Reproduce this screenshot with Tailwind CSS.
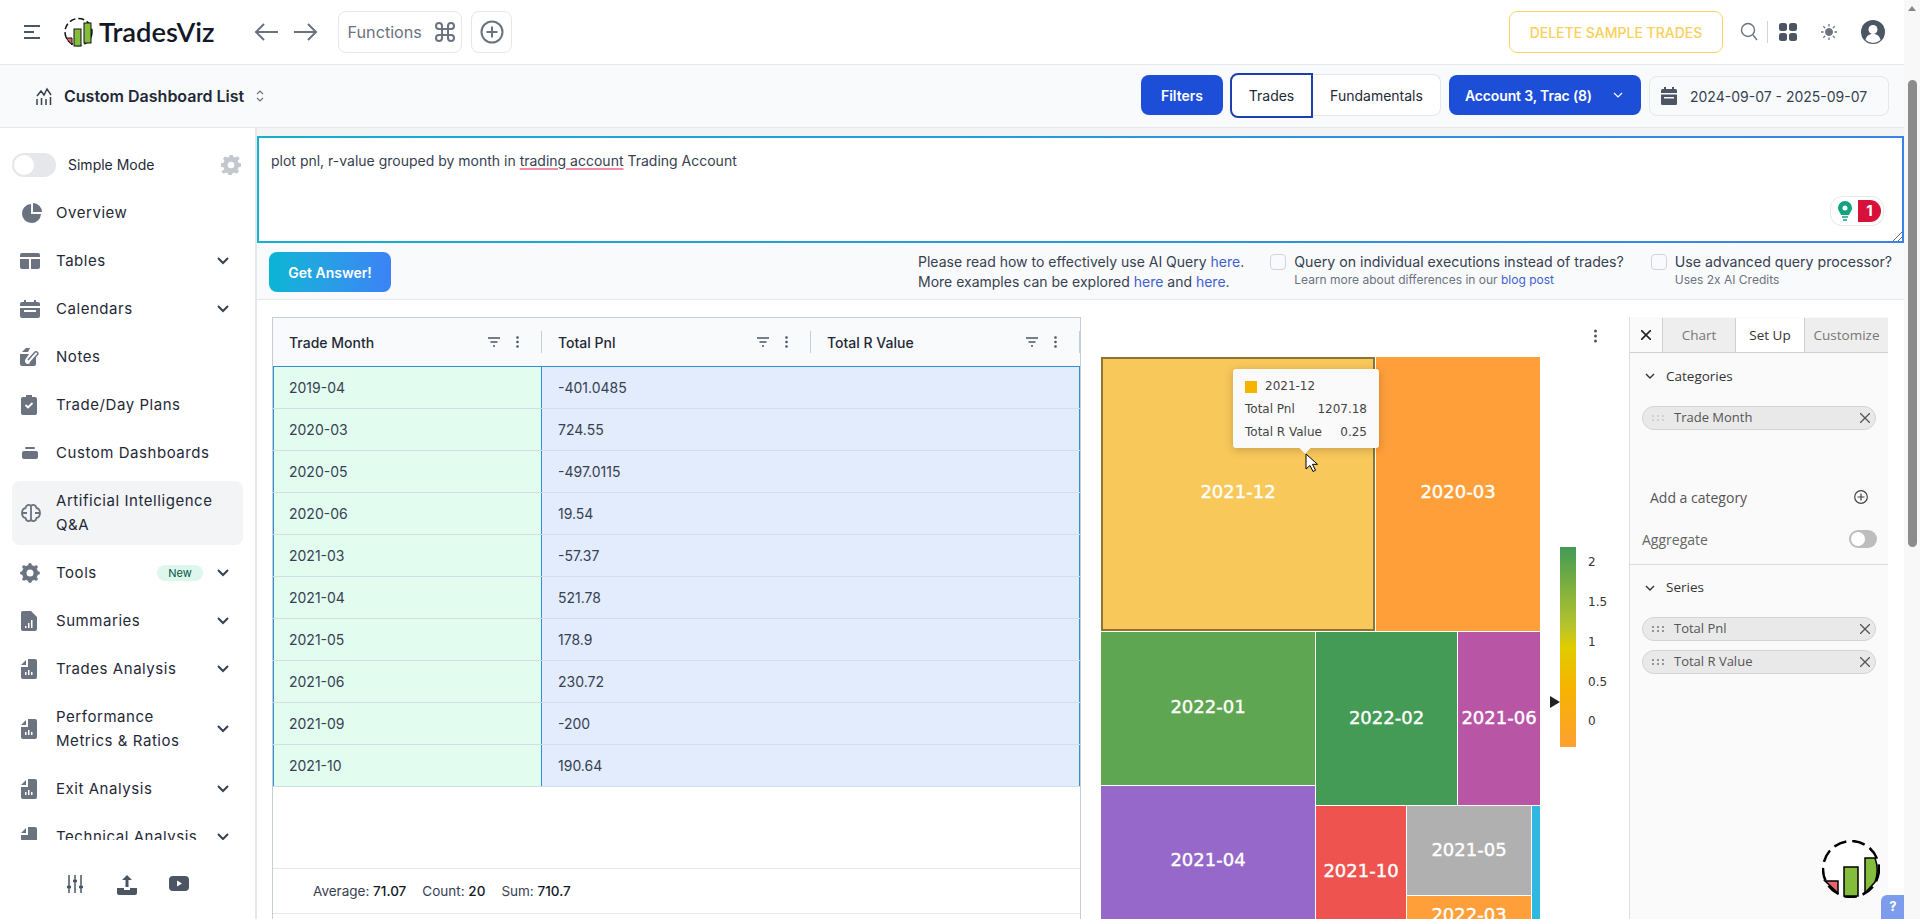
<!DOCTYPE html>
<html lang="en">
<head>
  <meta charset="UTF-8" />
  <title>TradesViz</title>
  <script src="https://cdn.jsdelivr.net/npm/@tailwindcss/browser@4"></script>
</head>
<body class="bg-white text-[#1f2937] [font-family:Inter,sans-serif]">
<div class="flex h-[919px] w-[1920px] overflow-hidden">
  <div class="flex w-[1904px] flex-col">

    <!-- Header -->
    <header class="flex h-[65px] shrink-0 items-center border-b border-[#e5e7eb] bg-white pl-6 pr-[19px]">
      <svg class="h-4 w-4" viewBox="0 0 16 16" fill="none" stroke="#4b5563" stroke-width="2"><path d="M0 2h16M0 8h10M0 14h16"/></svg>
      <svg class="ml-6 h-[36px] w-[29px]" viewBox="0 0 29 36"><circle cx="14.5" cy="18" r="13.5" fill="#fff" stroke="#111" stroke-width="1.5" stroke-dasharray="6 3"/><path d="M2 24l6 0 0 7z" fill="#e5646f" stroke="#111"/><rect x="10" y="15" width="7" height="17" fill="#84bd3c" stroke="#111"/><rect x="20" y="9" width="7" height="20" fill="#84bd3c" stroke="#111"/></svg>
      <span class="ml-[6px] text-[27.4px] leading-none font-semibold text-[#111827] [font-family:Lato,sans-serif]">TradesViz</span>
      <svg class="ml-10 h-5 w-6" viewBox="0 0 24 20" fill="none" stroke="#6b7280" stroke-width="2"><path d="M24 10H2M10 2l-8 8 8 8"/></svg>
      <svg class="ml-4 h-5 w-6" viewBox="0 0 24 20" fill="none" stroke="#6b7280" stroke-width="2"><path d="M0 10h22M14 2l8 8-8 8"/></svg>
      <div class="ml-5 flex h-[42px] w-[124px] items-center rounded-lg border border-[#e5e7eb] pl-2 text-[16.2px] text-[#6b7280]">
        Functions
        <svg class="ml-[11px] h-6 w-6" viewBox="0 0 24 24" fill="none" stroke="#6b7280" stroke-width="2"><path d="M9 9V6a3 3 0 1 0-3 3h12a3 3 0 1 0-3-3v12a3 3 0 1 0 3-3H6a3 3 0 1 0 3 3V9z"/></svg>
      </div>
      <div class="ml-[9px] flex h-[42px] w-[41px] items-center justify-center rounded-lg border border-[#e5e7eb]">
        <svg class="h-6 w-6" viewBox="0 0 24 24" fill="none" stroke="#6b7280" stroke-width="2"><circle cx="12" cy="12" r="10.5"/><path d="M12 6.5v11M6.5 12h11"/></svg>
      </div>
      <button class="ml-auto h-[42px] w-[214px] rounded-lg border border-[#f8d568] text-[14px] font-medium text-[#f9cf58]">DELETE SAMPLE TRADES</button>
      <svg class="ml-[17px] h-5 w-[18px]" viewBox="0 0 18 20" fill="none" stroke="#6b7280" stroke-width="1.4"><circle cx="8" cy="8" r="6.5"/><path d="M13 13l4 5"/></svg>
      <div class="ml-[9px] h-[22px] w-px bg-[#d1d5db]"></div>
      <svg class="ml-[11px] h-[18px] w-[18px]" viewBox="0 0 18 18" fill="#4b5563"><rect width="8" height="8" rx="2.5"/><rect x="10" width="8" height="8" rx="2.5"/><rect y="10" width="8" height="8" rx="2.5"/><rect x="10" y="10" width="8" height="8" rx="2.5"/></svg>
      <svg class="ml-[24px] h-4 w-4" viewBox="0 0 16 16" fill="#6b7280" stroke="#6b7280"><circle cx="8" cy="8" r="3.5"/><path d="M8 0v2.5M8 13.500V16M0 8h2.500M13.500 8H16M2.300 2.300l1.800 1.800M11.900 11.900l1.800 1.800M2.300 13.700l1.800-1.800M11.900 4.100l1.800-1.800" fill="none" stroke-width="1.300"/></svg>
      <svg class="ml-[24px] h-6 w-6" viewBox="0 0 24 24"><circle cx="12" cy="12" r="12" fill="#4b5563"/><circle cx="12" cy="9.500" r="4.500" fill="#fff"/><path d="M4.500 20c1-4.500 4-6 7.500-6s6.500 1.500 7.500 6a11 11 0 0 1-15 0z" fill="#fff"/></svg>
    </header>

    <!-- Sub header -->
    <div class="flex h-[63px] shrink-0 items-center border-b border-[#e5e7eb] bg-[#f9fafb] pl-9 pr-[15px]">
      <svg class="h-[18px] w-4" viewBox="0 0 16 18" fill="none" stroke="#374151" stroke-width="1.500"><path d="M1 9l4-5 3 4 3-6 4 6M1 12v6M5.500 11v7M10 12v6M14.500 10v8"/></svg>
      <span class="ml-3 text-[16px] font-semibold text-[#1f2937]">Custom Dashboard List</span>
      <svg class="ml-3 h-3 w-2" viewBox="0 0 8 12" fill="none" stroke="#6b7280" stroke-width="1.200"><path d="M1 4l3-3 3 3M1 8l3 3 3-3"/></svg>
      <button class="mb-[2px] ml-auto h-10 w-[82px] rounded-lg bg-[#1d4ed8] text-[14px] font-semibold text-white">Filters</button>
      <div class="mb-[2px] ml-[7px] flex h-[44px] items-center">
        <span class="flex h-[45px] w-[83px] items-center justify-center rounded-l-lg border-2 border-[#1e40af] bg-white text-[14px] text-[#1f2937]">Trades</span>
        <span class="flex h-[42px] w-[128px] items-center justify-center rounded-r-lg border border-l-0 border-[#e5e7eb] bg-white text-[14px] text-[#1f2937]">Fundamentals</span>
      </div>
      <button class="mb-[2px] ml-2 flex h-10 w-[192px] items-center rounded-lg bg-[#1d4ed8] pl-4 text-[14px] font-semibold text-white">
        <span class="w-[125px] whitespace-nowrap text-left tracking-[-0.15px]">Account 3, Trac (8)</span>
        <svg class="ml-[23px] h-2 w-[10px]" viewBox="0 0 10 8" fill="none" stroke="#fff" stroke-width="1.200"><path d="M1 2l4 4 4-4"/></svg>
      </button>
      <div class="ml-2 flex h-10 w-[240px] items-center rounded-lg border border-[#e5e7eb] bg-[#f9fafb] pl-[11px] text-[14px] text-[#374151]">
        <svg class="h-[18px] w-4" viewBox="0 0 16 18" fill="#4b5563"><path d="M3 0h2v2h6V0h2v2h1.500A1.500 1.500 0 0 1 16 3.500V6H0V3.500A1.500 1.500 0 0 1 1.500 2H3zM0 7.500h16v9a1.500 1.500 0 0 1-1.500 1.500h-13A1.500 1.500 0 0 1 0 16.500zM3 10v1.500h10V10z"/></svg>
        <span class="ml-[13px]">2024-09-07 - 2025-09-07</span>
      </div>
    </div>

    <div class="flex min-h-0 flex-1">
      <!-- Sidebar -->
      <aside class="flex w-[257px] shrink-0 flex-col border-r-2 border-[#e5e7eb] bg-white">
        <div class="h-[712px] shrink-0 overflow-hidden text-[15px] tracking-[0.55px] text-[#1f2937]">
          <div class="mt-3 flex h-[49px] items-center pl-3 pr-3">
            <span class="flex h-[24px] w-[44px] items-center rounded-full bg-[#e5e7eb] pl-[2px]"><span class="h-5 w-5 rounded-full bg-white"></span></span>
            <span class="ml-[12px] text-[14px] tracking-normal">Simple Mode</span>
            <svg class="ml-auto mr-[2px] h-5 w-5" viewBox="0 0 24 24" fill="#c4c8ce"><path d="M10 1h4l.7 3 2.500 1 2.600-1.600 2.800 2.800L20 8.800l1 2.500 3 .7v4l-3 .7-1 2.500 1.600 2.600-2.800 2.800-2.600-1.600-2.500 1-.7 3h-4l-.7-3-2.500-1-2.600 1.600-2.800-2.800L4 19.200 3 16.700 0 16v-4l3-.7 1-2.500L2.400 6.200l2.800-2.800L7.800 5l2.500-1z" transform="translate(0 -2)"/><circle cx="12" cy="12" r="4" fill="#fff"/></svg>
          </div>
          <div class="flex h-12 items-center pl-[22px]">
            <svg class="h-5 w-5" viewBox="0 0 20 20" fill="#6b7280"><path d="M9 1v10h10A9.500 9.500 0 1 1 9 1z"/><path d="M11 0a9 9 0 0 1 9 9h-9z"/></svg>
            <span class="ml-[14px]">Overview</span>
          </div>
          <div class="flex h-12 items-center pl-5 pr-[26px]">
            <svg class="h-4 w-5" viewBox="0 0 20 16" fill="#6b7280"><path d="M2 0h16a2 2 0 0 1 2 2v2H0V2a2 2 0 0 1 2-2zM0 6h9v10H2a2 2 0 0 1-2-2zM11 6h9v8a2 2 0 0 1-2 2h-7z"/></svg>
            <span class="ml-4">Tables</span>
            <svg class="ml-auto h-2 w-3" viewBox="0 0 12 8" fill="none" stroke="#374151" stroke-width="2"><path d="M1 1l5 5 5-5"/></svg>
          </div>
          <div class="flex h-12 items-center pl-5 pr-[26px]">
            <svg class="h-[18px] w-5" viewBox="0 0 20 18" fill="#6b7280"><path d="M4 0h2v2h8V0h2v2h2a2 2 0 0 1 2 2v2H0V4a2 2 0 0 1 2-2h2zM0 8h20v8a2 2 0 0 1-2 2H2a2 2 0 0 1-2-2zM4 10v2h12v-2z"/></svg>
            <span class="ml-4">Calendars</span>
            <svg class="ml-auto h-2 w-3" viewBox="0 0 12 8" fill="none" stroke="#374151" stroke-width="2"><path d="M1 1l5 5 5-5"/></svg>
          </div>
          <div class="flex h-12 items-center pl-5">
            <svg class="h-[18px] w-5" viewBox="0 0 20 18" fill="#6b7280"><path d="M2 4l4-4h4L8 4zM0 6h9L5 12a3 3 0 0 0 5 3l6-7v8a2 2 0 0 1-2 2H2a2 2 0 0 1-2-2z"/><path d="M8 12l7-8a2 2 0 0 1 3 2l-8 9" fill="none" stroke="#6b7280" stroke-width="1.500"/></svg>
            <span class="ml-4">Notes</span>
          </div>
          <div class="flex h-12 items-center pl-[21px]">
            <svg class="h-5 w-4" viewBox="0 0 16 20" fill="#6b7280"><path d="M5 0h6v2h3a2 2 0 0 1 2 2v14a2 2 0 0 1-2 2H2a2 2 0 0 1-2-2V4a2 2 0 0 1 2-2h3z"/><path d="M4.500 10l2.500 2.500 4.500-4.500" fill="none" stroke="#fff" stroke-width="1.800"/></svg>
            <span class="ml-[19px]">Trade/Day Plans</span>
          </div>
          <div class="flex h-12 items-center pl-[22px]">
            <svg class="h-3 w-4" viewBox="0 0 16 12" fill="#6b7280"><rect x="3" width="10" height="2" rx="1"/><path d="M2 4h12a2 2 0 0 1 2 2v4a2 2 0 0 1-2 2H2a2 2 0 0 1-2-2V6a2 2 0 0 1 2-2z"/></svg>
            <span class="ml-[18px]">Custom Dashboards</span>
          </div>
          <div class="mx-3 my-1 flex h-16 items-center rounded-lg bg-[#f3f4f6] pl-[9px] leading-6">
            <svg class="h-5 w-5 shrink-0" viewBox="0 0 20 20" fill="none" stroke="#6b7280" stroke-width="1.800"><path d="M10 3C8 1 5 2 4.500 5 2 5.500 1 8 1 10s1 4.500 3.500 5c.5 3 3.500 4 5.500 2 2 2 5 1 5.500-2 2.500-.5 3.500-3 3.500-5s-1-4.500-3.500-5C15 2 12 1 10 3zM10 3v14M1 10h5M14 10h5"/></svg>
            <span class="ml-[15px]">Artificial Intelligence<br>Q&amp;A</span>
          </div>
          <div class="flex h-12 items-center pl-5 pr-[26px]">
            <svg class="h-5 w-5" viewBox="0 0 20 20" fill="#6b7280"><circle cx="10" cy="10" r="8"/><circle cx="10" cy="1.800" r="1.800"/><circle cx="10" cy="18.200" r="1.800"/><circle cx="1.800" cy="10" r="1.800"/><circle cx="18.200" cy="10" r="1.800"/><circle cx="4" cy="4" r="1.800"/><circle cx="16" cy="4" r="1.800"/><circle cx="4" cy="16" r="1.800"/><circle cx="16" cy="16" r="1.800"/><circle cx="10" cy="10" r="3.500" fill="#fff"/></svg>
            <span class="ml-4">Tools</span>
            <span class="ml-auto flex h-4 w-[46px] items-center justify-center rounded-full bg-[#def7ec] text-[11px] tracking-normal text-[#03543f]">New</span>
            <svg class="ml-[14px] h-2 w-3" viewBox="0 0 12 8" fill="none" stroke="#374151" stroke-width="2"><path d="M1 1l5 5 5-5"/></svg>
          </div>
          <div class="flex h-12 items-center pl-[21px] pr-[26px]">
            <svg class="h-5 w-4" viewBox="0 0 16 20" fill="#6b7280"><path d="M2 0h8l6 6v12a2 2 0 0 1-2 2H2a2 2 0 0 1-2-2V2a2 2 0 0 1 2-2z"/><path d="M4 15v2h1.500v-2zM7 12v5h1.500v-5zM10 9v8h1.500V9z" fill="#fff"/></svg>
            <span class="ml-[19px]">Summaries</span>
            <svg class="ml-auto h-2 w-3" viewBox="0 0 12 8" fill="none" stroke="#374151" stroke-width="2"><path d="M1 1l5 5 5-5"/></svg>
          </div>
          <div class="flex h-12 items-center pl-[21px] pr-[26px]">
            <svg class="h-5 w-4" viewBox="0 0 16 20" fill="#6b7280"><path d="M0 6l5-5v5zM7 0h7a2 2 0 0 1 2 2v16a2 2 0 0 1-2 2H2a2 2 0 0 1-2-2V8h7z"/><path d="M4 13v3h1.500v-3zM7 11v5h1.500v-5zM10 13v3h1.500v-3z" fill="#fff"/></svg>
            <span class="ml-[19px]">Trades Analysis</span>
            <svg class="ml-auto h-2 w-3" viewBox="0 0 12 8" fill="none" stroke="#374151" stroke-width="2"><path d="M1 1l5 5 5-5"/></svg>
          </div>
          <div class="flex h-[72px] items-center pl-[21px] pr-[26px] leading-6">
            <svg class="h-5 w-4" viewBox="0 0 16 20" fill="#6b7280"><path d="M0 6l5-5v5zM7 0h7a2 2 0 0 1 2 2v16a2 2 0 0 1-2 2H2a2 2 0 0 1-2-2V8h7z"/><path d="M4 13v3h1.500v-3zM7 11v5h1.500v-5zM10 13v3h1.500v-3z" fill="#fff"/></svg>
            <span class="ml-[19px]">Performance<br>Metrics &amp; Ratios</span>
            <svg class="ml-auto h-2 w-3" viewBox="0 0 12 8" fill="none" stroke="#374151" stroke-width="2"><path d="M1 1l5 5 5-5"/></svg>
          </div>
          <div class="flex h-12 items-center pl-[21px] pr-[26px]">
            <svg class="h-5 w-4" viewBox="0 0 16 20" fill="#6b7280"><path d="M0 6l5-5v5zM7 0h7a2 2 0 0 1 2 2v16a2 2 0 0 1-2 2H2a2 2 0 0 1-2-2V8h7z"/><path d="M4 13v3h1.500v-3zM7 11v5h1.500v-5zM10 13v3h1.500v-3z" fill="#fff"/></svg>
            <span class="ml-[19px]">Exit Analysis</span>
            <svg class="ml-auto h-2 w-3" viewBox="0 0 12 8" fill="none" stroke="#374151" stroke-width="2"><path d="M1 1l5 5 5-5"/></svg>
          </div>
          <div class="flex h-12 items-center pl-[21px] pr-[26px]">
            <svg class="h-5 w-4" viewBox="0 0 16 20" fill="#6b7280"><path d="M0 6l5-5v5zM7 0h7a2 2 0 0 1 2 2v16a2 2 0 0 1-2 2H2a2 2 0 0 1-2-2V8h7z"/></svg>
            <span class="ml-[19px]">Technical Analysis</span>
            <svg class="ml-auto h-2 w-3" viewBox="0 0 12 8" fill="none" stroke="#374151" stroke-width="2"><path d="M1 1l5 5 5-5"/></svg>
          </div>
        </div>
        <div class="flex flex-1 items-start pl-[67px] pt-[35px]">
          <svg class="h-[18px] w-4" viewBox="0 0 16 18" fill="none" stroke="#4b5563" stroke-width="1.500"><path d="M2 0v18M8 0v18M14 0v18"/><path d="M0 12h4M6 6h4M12 12h4" stroke-width="2.500"/></svg>
          <svg class="ml-[34px] h-5 w-5" viewBox="0 0 20 20" fill="#4b5563"><path d="M10 0l5 5h-3.500v7h-3V5H5zM0 13h7v2h6v-2h7v5a2 2 0 0 1-2 2H2a2 2 0 0 1-2-2z"/></svg>
          <svg class="ml-[32px] mt-[1px] h-4 w-5" viewBox="0 0 20 16" fill="#4b5563"><rect width="20" height="15" rx="4"/><path d="M8 4.500l5 3-5 3z" fill="#fff"/></svg>
        </div>
      </aside>

      <!-- Main -->
      <main class="relative flex min-w-0 flex-1 flex-col bg-white">
        <div class="h-2 shrink-0 bg-[#f3f4f6]"></div>
        <div class="relative h-[107px] shrink-0 border-2 border-transparent pl-[12px] pt-[12px] text-[14px] text-[#374151] [background:linear-gradient(#fff,#fff)_padding-box,linear-gradient(90deg,#14b0cf,#3b82e6)_border-box]">
          plot pnl, r-value grouped by month in <span class="underline decoration-[#f58ca5] decoration-2 underline-offset-2">trading account</span> Trading Account
          <div class="absolute right-[18px] bottom-[15px] flex h-[30px] w-[54px] items-center rounded-xl border border-[#e5e7eb] bg-white pl-[7px]">
            <svg class="h-5 w-[14px]" viewBox="0 0 14 20"><path d="M7 0a7 7 0 0 1 7 7c0 3-2 4-3 7H3C2 11 0 10 0 7a7 7 0 0 1 7-7z" fill="#10a37f"/><circle cx="7" cy="7" r="2.500" fill="#fff"/><path d="M4 16h6M5 19h4" stroke="#10a37f" stroke-width="1.500"/></svg>
            <span class="ml-[6px] flex h-[22px] w-[23px] items-center justify-center rounded-l-[4px] rounded-r-full bg-[#d8113a] text-[15px] font-bold text-white">1</span>
          </div>
          <svg class="absolute right-0 bottom-0 h-[10px] w-[10px]" viewBox="0 0 10 10" stroke="#666" fill="none"><path d="M1 10l9-9M6 10l4-4"/></svg>
        </div>
        <div class="flex h-[57px] shrink-0 border-b border-[#e5e7eb] bg-[#f9fafb] text-[14px] text-[#374151]">
          <button class="ml-3 mt-[9px] h-10 w-[122px] rounded-lg bg-linear-to-r from-[#06b6d4] to-[#3b82f6] text-[14px] font-semibold text-white">Get Answer!</button>
          <div class="ml-[527px] mt-[9px] leading-5">
            Please read how to effectively use AI Query <a class="text-[#3f5fd0]">here</a>.<br>
            More examples can be explored <a class="text-[#3f5fd0]">here</a> and <a class="text-[#3f5fd0]">here</a>.
          </div>
          <span class="ml-[26px] mt-[11px] h-4 w-4 rounded-[4px] border border-[#d1d5db] bg-[#f9fafb]"></span>
          <div class="ml-2 mt-[9px]">
            <div class="text-[14.15px] leading-5">Query on individual executions instead of trades?</div>
            <div class="text-[12px] leading-4 text-[#6b7280]">Learn more about differences in our <a class="text-[#3f5fd0]">blog post</a></div>
          </div>
          <span class="ml-[27px] mt-[11px] h-4 w-4 rounded-[4px] border border-[#d1d5db] bg-[#f9fafb]"></span>
          <div class="ml-2 mt-[9px]">
            <div class="text-[14.15px] leading-5">Use advanced query processor?</div>
            <div class="text-[12px] leading-4 text-[#6b7280]">Uses 2x AI Credits</div>
          </div>
        </div>

        <div class="flex min-h-0 flex-1">
          <!-- Table -->
          <div class="ml-[15px] mt-[17px] flex w-[809px] shrink-0 flex-col border border-b-0 border-[#c5ced6] text-[14px]">
            <div class="grid h-[48px] shrink-0 grid-cols-3 bg-[#f9fafb] font-medium text-[#1f2937]">
              <div class="flex items-center pl-4 pr-0">Trade Month
                <svg class="ml-auto h-[10px] w-3" viewBox="0 0 12 10" fill="none" stroke="#4b5563" stroke-width="1.500"><path d="M0 1h12M2.500 5h7M5 9h2"/></svg>
                <svg class="ml-[16px] h-3 w-[3px]" viewBox="0 0 3 12" fill="#4b5563"><circle cx="1.500" cy="1.500" r="1.300"/><circle cx="1.500" cy="6" r="1.300"/><circle cx="1.500" cy="10.500" r="1.300"/></svg>
                <span class="ml-[22px] h-[22px] w-px bg-[#c5ced6]"></span>
              </div>
              <div class="flex items-center pl-4">Total Pnl
                <svg class="ml-auto h-[10px] w-3" viewBox="0 0 12 10" fill="none" stroke="#4b5563" stroke-width="1.500"><path d="M0 1h12M2.500 5h7M5 9h2"/></svg>
                <svg class="ml-[16px] h-3 w-[3px]" viewBox="0 0 3 12" fill="#4b5563"><circle cx="1.500" cy="1.500" r="1.300"/><circle cx="1.500" cy="6" r="1.300"/><circle cx="1.500" cy="10.500" r="1.300"/></svg>
                <span class="ml-[22px] h-[22px] w-px bg-[#c5ced6]"></span>
              </div>
              <div class="flex items-center pl-4">Total R Value
                <svg class="ml-auto h-[10px] w-3" viewBox="0 0 12 10" fill="none" stroke="#4b5563" stroke-width="1.500"><path d="M0 1h12M2.500 5h7M5 9h2"/></svg>
                <svg class="ml-[16px] h-3 w-[3px]" viewBox="0 0 3 12" fill="#4b5563"><circle cx="1.500" cy="1.500" r="1.300"/><circle cx="1.500" cy="6" r="1.300"/><circle cx="1.500" cy="10.500" r="1.300"/></svg>
                <span class="ml-[22px] h-[22px] w-px bg-[#c5ced6]"></span>
              </div>
            </div>
            <div id="rows" class="h-[502px] shrink-0 border-t border-[#2f8fd0]"></div>
            <div class="flex h-[46px] shrink-0 items-center border-y border-[#e5e7eb] pl-10 text-[13.500px] text-[#374151]">
              <span>Average: <b class="font-medium text-[#111827]">71.07</b></span>
              <span class="ml-4">Count: <b class="font-medium text-[#111827]">20</b></span>
              <span class="ml-4">Sum: <b class="font-medium text-[#111827]">710.7</b></span>
            </div>
          </div>

          <!-- Treemap -->
          <div class="relative w-[548px] shrink-0 overflow-hidden text-white [-webkit-text-stroke:0.4px_white] [font-family:'DejaVu_Sans',sans-serif]">
            <svg class="absolute left-[513px] top-[29px] h-[14px] w-[3px]" viewBox="0 0 3 14" fill="#4b5563"><circle cx="1.500" cy="2" r="1.500"/><circle cx="1.500" cy="7" r="1.500"/><circle cx="1.500" cy="12" r="1.500"/></svg>
            <div class="absolute left-[20px] top-[57px] flex h-[274px] w-[274px] items-center justify-center border-2 border-[#8d7430] bg-[#f9c85a] pb-[5px] text-[18px]">2021-12</div>
            <div class="absolute left-[295px] top-[57px] flex h-[274px] w-[164px] items-center justify-center bg-[#ff9f3a] pb-[5px] text-[18px]">2020-03</div>
            <div class="absolute left-[20px] top-[332px] flex h-[153px] w-[214px] items-center justify-center bg-[#5fa652] pb-[4px] text-[18px]">2022-01</div>
            <div class="absolute left-[235px] top-[332px] flex h-[173px] w-[141px] items-center justify-center bg-[#439b55] pb-[3px] text-[18px]">2022-02</div>
            <div class="absolute left-[377px] top-[332px] flex h-[173px] w-[82px] items-center justify-center bg-[#b855a5] pb-[3px] text-[18px]">2021-06</div>
            <div class="absolute left-[20px] top-[486px] flex h-[146px] w-[214px] items-center justify-center bg-[#9568c9] text-[18px]">2021-04</div>
            <div class="absolute left-[235px] top-[506px] flex h-[128px] w-[90px] items-center justify-center bg-[#ef5350] text-[18px]">2021-10</div>
            <div class="absolute left-[326px] top-[506px] flex h-[89px] w-[124px] items-center justify-center bg-[#b0b0b0] pb-[2px] text-[18px]">2021-05</div>
            <div class="absolute left-[326px] top-[596px] flex h-[34px] w-[124px] items-center justify-center bg-[#ff9f3a] pt-[2px] text-[18px]">2022-03</div>
            <div class="absolute left-[451px] top-[506px] h-[128px] w-2 bg-[#2fb8e0]"></div>

            <!-- Legend -->
            <div class="absolute left-[479px] top-[247px] h-[200px] w-4 bg-[linear-gradient(#439b55_0%,#b8c42a_40%,#e0cc00_50%,#f5b400_70%,#ffa030_100%)]"></div>
            <div class="absolute left-[469px] top-[396px] h-0 w-0 border-y-[6px] border-l-[10px] border-y-transparent border-l-[#222]"></div>
            <span class="absolute left-[507px] top-[253px] text-[12px] text-[#333] [-webkit-text-stroke:0]">2</span>
            <span class="absolute left-[507px] top-[293px] text-[12px] text-[#333] [-webkit-text-stroke:0]">1.5</span>
            <span class="absolute left-[507px] top-[333px] text-[12px] text-[#333] [-webkit-text-stroke:0]">1</span>
            <span class="absolute left-[507px] top-[373px] text-[12px] text-[#333] [-webkit-text-stroke:0]">0.5</span>
            <span class="absolute left-[507px] top-[412px] text-[12px] text-[#333] [-webkit-text-stroke:0]">0</span>

            <!-- Tooltip -->
            <div class="absolute left-[152px] top-[69px] h-[79px] w-[146px] rounded-[3px] bg-[#fafafa] px-3 pt-[6px] text-[12px] leading-[23px] text-[#444] shadow-[0_2px_10px_rgba(0,0,0,0.2)] [-webkit-text-stroke:0]">
              <div class="flex items-center"><span class="mr-2 h-3 w-3 bg-[#f5b400]"></span>2021-12</div>
              <div class="flex justify-between"><span>Total Pnl</span><span>1207.18</span></div>
              <div class="flex justify-between"><span>Total R Value</span><span>0.25</span></div>
              <span class="absolute left-[68px] top-[75px] h-[8px] w-[8px] rotate-45 bg-[#fafafa]"></span>
            </div>
            <svg class="absolute left-[224px] top-[153px] h-5 w-[13px]" viewBox="0 0 13 20"><path d="M1 1v15l4-3.500 3 6 2.500-1.200-3-6h5z" fill="#fff" stroke="#000" stroke-width="1"/></svg>
          </div>

          <!-- Chart config panel -->
          <div class="mt-[17px] flex w-[259px] shrink-0 flex-col border-l border-[#dcdcdc] bg-[#fafafa] text-[14px] text-[#555] [font-family:'Open_Sans',sans-serif]">
            <div class="flex h-9 shrink-0 items-stretch border-b border-[#cfcfcf] pt-[1px] text-[13.500px]">
              <div class="flex w-[33px] items-center justify-center border-r border-[#cfcfcf] bg-[#fafafa]">
                <svg class="h-[10px] w-[10px]" viewBox="0 0 10 10" fill="none" stroke="#222" stroke-width="1.600"><path d="M0 0l10 10M10 0L0 10"/></svg>
              </div>
              <div class="flex w-[73px] items-center justify-center border-r border-[#cfcfcf] bg-[#eeeeee] text-[#777]">Chart</div>
              <div class="flex w-[69px] items-center justify-center border-r border-[#cfcfcf] bg-white text-[#333]">Set Up</div>
              <div class="flex flex-1 items-center justify-center bg-[#eeeeee] text-[#777]">Customize</div>
            </div>
            <div class="flex h-[46px] shrink-0 items-center pl-[15px] text-[13.500px] text-[#333]">
              <svg class="h-[6px] w-[10px]" viewBox="0 0 10 6" fill="none" stroke="#333" stroke-width="1.400"><path d="M1 1l4 4 4-4"/></svg>
              <span class="ml-[11px] font-medium">Categories</span>
            </div>
            <div class="mx-3 mt-[7px] flex h-6 shrink-0 items-center rounded-full border border-[#d4d4d4] bg-[#e9e9e9] pl-[9px] pr-[3px] text-[13px]">
              <svg class="h-[6px] w-[12px]" viewBox="0 0 12 6" fill="#c8c8c8"><circle cx="1" cy="1" r="1"/><circle cx="6" cy="1" r="1"/><circle cx="11" cy="1" r="1"/><circle cx="1" cy="5" r="1"/><circle cx="6" cy="5" r="1"/><circle cx="11" cy="5" r="1"/></svg>
              <span class="ml-[10px]">Trade Month</span>
              <svg class="ml-auto mr-[2px] h-[10px] w-[10px]" viewBox="0 0 10 10" fill="none" stroke="#555" stroke-width="1.300"><path d="M0 0l10 10M10 0L0 10"/></svg>
            </div>
            <div class="mt-[55px] flex h-6 shrink-0 items-center pl-5 pr-[20px]">
              Add a category
              <svg class="ml-auto h-[14px] w-[14px]" viewBox="0 0 14 14" fill="none" stroke="#444" stroke-width="1.200"><circle cx="7" cy="7" r="6.300"/><path d="M7 3.500v7M3.500 7h7"/></svg>
            </div>
            <div class="mt-[21px] flex h-[18px] shrink-0 items-center pl-3 pr-[11px] text-[#666]">
              Aggregate
              <span class="ml-auto flex h-[18px] w-7 items-center rounded-full bg-[#bdbdbd] pl-[2px]"><span class="h-[14px] w-[14px] rounded-full bg-white"></span></span>
            </div>
            <div class="mt-[16px] border-t border-[#dcdcdc]"></div>
            <div class="flex h-[45px] shrink-0 items-center pl-[15px] text-[13.500px] text-[#333]">
              <svg class="h-[6px] w-[10px]" viewBox="0 0 10 6" fill="none" stroke="#333" stroke-width="1.400"><path d="M1 1l4 4 4-4"/></svg>
              <span class="ml-[11px] font-medium">Series</span>
            </div>
            <div class="mx-3 mt-[7px] flex h-6 shrink-0 items-center rounded-full border border-[#d4d4d4] bg-[#e9e9e9] pl-[9px] pr-[3px] text-[13px]">
              <svg class="h-[6px] w-[12px]" viewBox="0 0 12 6" fill="#777"><circle cx="1" cy="1" r="1"/><circle cx="6" cy="1" r="1"/><circle cx="11" cy="1" r="1"/><circle cx="1" cy="5" r="1"/><circle cx="6" cy="5" r="1"/><circle cx="11" cy="5" r="1"/></svg>
              <span class="ml-[10px]">Total Pnl</span>
              <svg class="ml-auto mr-[2px] h-[10px] w-[10px]" viewBox="0 0 10 10" fill="none" stroke="#555" stroke-width="1.300"><path d="M0 0l10 10M10 0L0 10"/></svg>
            </div>
            <div class="mx-3 mt-[9px] flex h-6 shrink-0 items-center rounded-full border border-[#d4d4d4] bg-[#e9e9e9] pl-[9px] pr-[3px] text-[13px]">
              <svg class="h-[6px] w-[12px]" viewBox="0 0 12 6" fill="#777"><circle cx="1" cy="1" r="1"/><circle cx="6" cy="1" r="1"/><circle cx="11" cy="1" r="1"/><circle cx="1" cy="5" r="1"/><circle cx="6" cy="5" r="1"/><circle cx="11" cy="5" r="1"/></svg>
              <span class="ml-[10px]">Total R Value</span>
              <svg class="ml-auto mr-[2px] h-[10px] w-[10px]" viewBox="0 0 10 10" fill="none" stroke="#555" stroke-width="1.300"><path d="M0 0l10 10M10 0L0 10"/></svg>
            </div>
          </div>
        </div>

        <!-- Floating logo and help -->
        <svg class="absolute left-[1565px] top-[712px] h-[58px] w-[58px]" viewBox="0 0 58 58"><circle cx="29" cy="29" r="28" fill="#fff" stroke="#000" stroke-width="2.500" stroke-dasharray="13 6"/><path d="M3 41h13v12z" fill="#e5646f" stroke="#000" stroke-width="1.500"/><rect x="22" y="27" width="14" height="29" fill="#84bd3c" stroke="#000" stroke-width="1.500"/><path d="M43 18h10c3 8 3 16 0 24l-10 11z" fill="#84bd3c" stroke="#000" stroke-width="1.500"/></svg>
        <div class="absolute left-[1624px] top-[767px] flex h-6 w-6 items-center justify-center rounded-tl-md bg-[#7e9cec] text-[13px] font-bold text-white">?</div>
        <div class="absolute left-[1650px] top-[780px] h-0 w-0 border-x-[5px] border-t-[5px] border-x-transparent border-t-[#888]"></div>
      </main>
    </div>
  </div>

  <!-- Page scrollbar -->
  <div class="relative w-4 shrink-0 bg-[#f8f8f8]">
    <div class="absolute left-[4px] top-[6px] h-0 w-0 border-x-[4px] border-b-[5px] border-x-transparent border-b-[#888]"></div>
    <div class="absolute left-[4px] top-[80px] h-[467px] w-[9px] rounded-full bg-[#8c8c8c]"></div>
  </div>
</div>

<script>
  // Grid rows from the query result
  const data = [
    ["2019-04", "-401.0485"], ["2020-03", "724.55"], ["2020-05", "-497.0115"],
    ["2020-06", "19.54"], ["2021-03", "-57.37"], ["2021-04", "521.78"],
    ["2021-05", "178.9"], ["2021-06", "230.72"], ["2021-09", "-200"], ["2021-10", "190.64"]
  ];
  document.getElementById("rows").innerHTML = data.map(([month, pnl]) => `
    <div class="grid h-[42px] grid-cols-3 border-b border-[#cfdfe8] text-[#374151]">
      <div class="flex items-center border-l border-r border-l-[#2f8fd0] border-r-[#2f8fd0] bg-[#e2fdf0] pl-[15px]">${month}</div>
      <div class="col-span-2 flex items-center border-r border-[#2f8fd0] bg-[#e2ecfd] pl-4">${pnl}</div>
    </div>`).join("");
</script>
</body>
</html>
